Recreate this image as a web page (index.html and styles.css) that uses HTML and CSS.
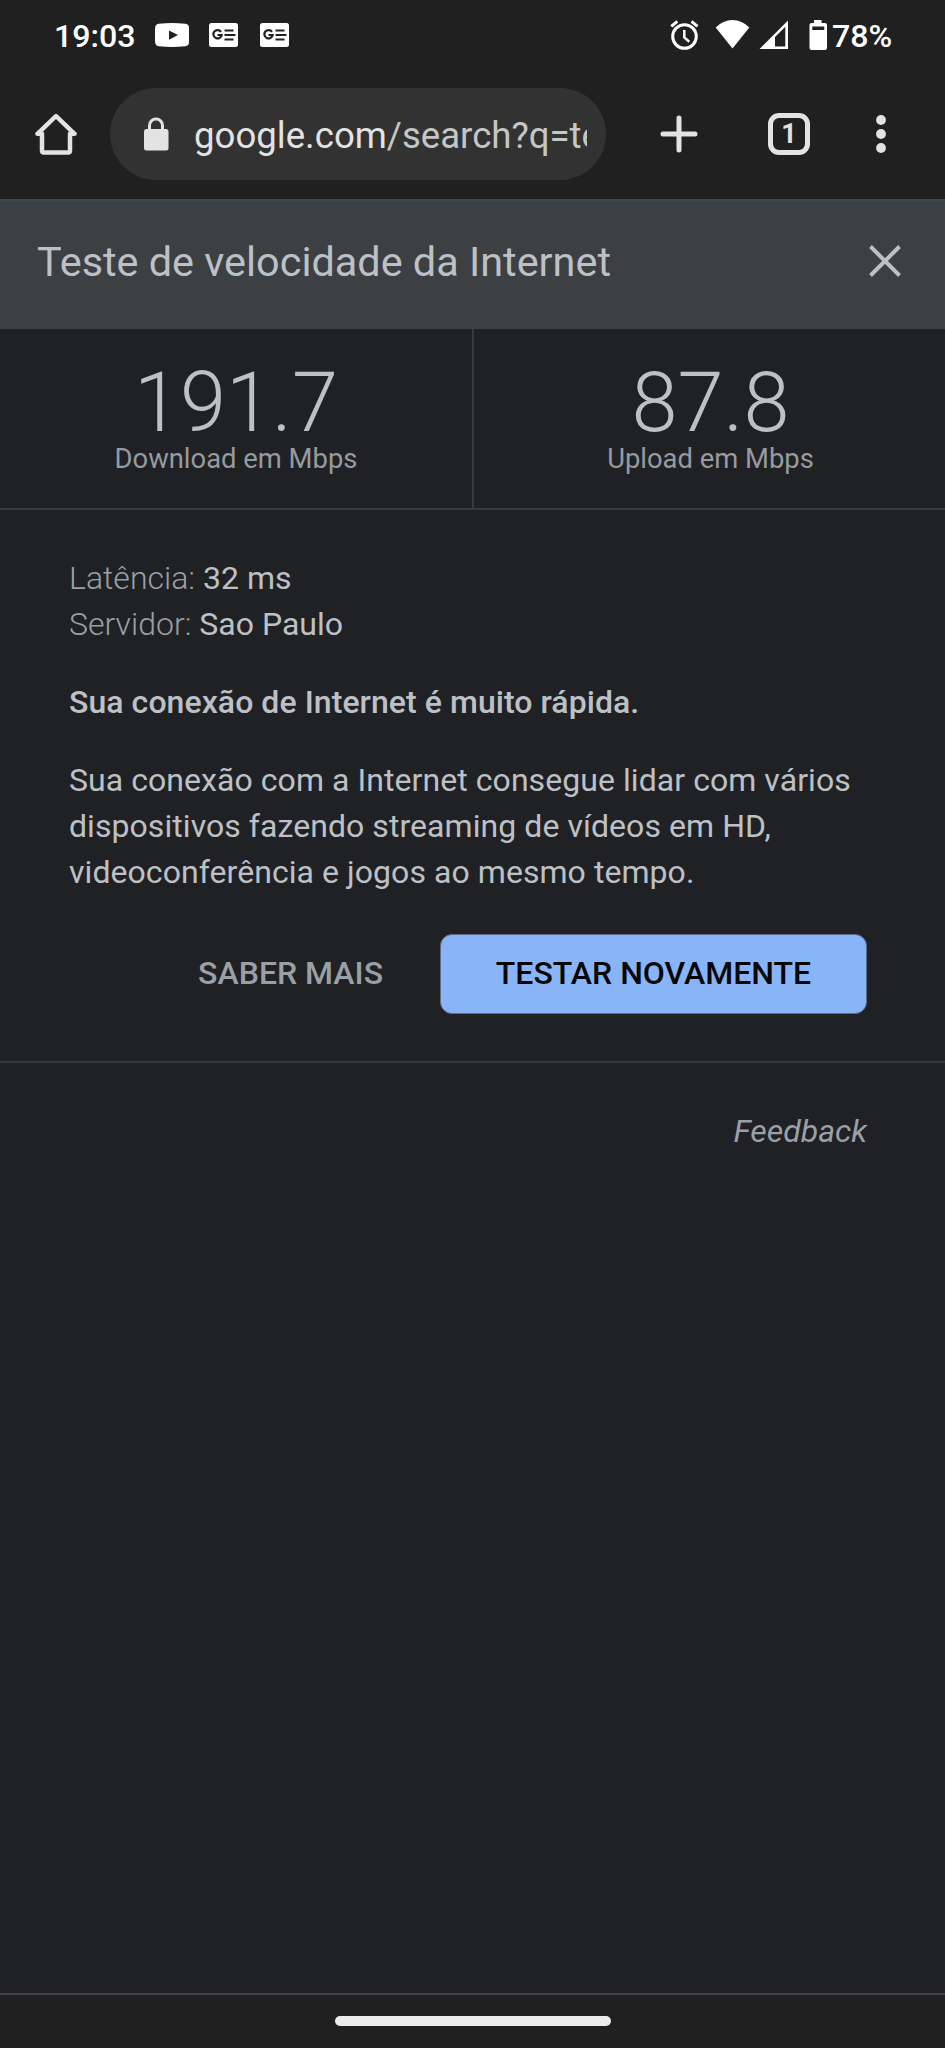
FILE: index.html
```html
<!DOCTYPE html>
<html lang="pt-BR">
<head>
<meta charset="utf-8">
<title>Teste de velocidade da Internet</title>
<link rel="stylesheet" href="styles.css">
</head>
<body>
<div class="screen">
  <div class="status">
    <span class="clock">19:03</span>
    <svg class="notif-video" width="34" height="24" viewBox="0 0 34 24"><path fill="#fff" fill-rule="evenodd" d="M4 .7Q17-.7 30 .7q4 .3 4 4Q34.500 12 34 19.300q0 3.700-4 4Q17 24.700 4 23.300q-3.600-.3-3.900-4Q-.4 12 .1 4.700.4 1 4 .7zM14 7.500v9.200l9-4.600z"/></svg>
    <svg class="notif-news" width="29" height="24" viewBox="0 0 29 24"><rect width="29" height="24" rx="2.500" fill="#fff"/><g fill="none" stroke="#202020" stroke-width="2.200"><path d="M12 8.800A4.200 4.200 0 1 0 12.700 12H8.500"/><path d="M15.500 7.500h9M15.500 12h11M15.500 16.500h9"/></g></svg>
    <svg class="notif-news second" width="29" height="24" viewBox="0 0 29 24"><rect width="29" height="24" rx="2.500" fill="#fff"/><g fill="none" stroke="#202020" stroke-width="2.200"><path d="M12 8.800A4.200 4.200 0 1 0 12.700 12H8.500"/><path d="M15.500 7.500h9M15.500 12h11M15.500 16.500h9"/></g></svg>
    <svg class="sys-icons" width="160" height="32" viewBox="0 0 160 32">
      <g fill="none" stroke="#fff"><circle cx="15.500" cy="17.500" r="11.800" stroke-width="3"/><path stroke-width="2.500" d="M15.300 11v7.500l5 4.300"/><path stroke-width="3" d="M2.300 7.300l6-5M28.500 7.300l-6-5"/></g>
      <path fill="#fff" d="M46.700 8.500Q54 1 63.500 1T80.300 8.500L63.500 29.500z"/>
      <path fill="#fff" fill-rule="evenodd" d="M90.500 30L119 1.500V30zM106 18v9.500h10.300V7.800z"/>
      <path fill="#fff" fill-rule="evenodd" d="M145 1h7.500v3h3.500q2 0 2 2v23q0 2-2 2h-13.500q-2 0-2-2V6q0-2 2-2h2.500zM143.300 7.500v3.500h12V7.500z"/>
    </svg>
    <span class="battery">78%</span>
  </div>
  <div class="toolbar">
    <svg class="home" width="42" height="42" viewBox="0 0 42 42"><path fill="none" stroke="#e3e3e3" stroke-width="4.500" stroke-linejoin="round" stroke-linecap="round" d="M2.500 20.800L21 3l18.500 17.800M2.500 20.800H7V37.500q0 2 2 2h24q2 0 2-2V20.800h4.500"/></svg>
    <div class="omnibox">
      <svg width="26" height="34" viewBox="0 0 26 34"><rect x="1" y="12" width="24.500" height="21.500" rx="2.500" fill="#e3e3e3"/><path fill="none" stroke="#e3e3e3" stroke-width="3" d="M6.500 13V8.500a6.500 6.500 0 0 1 13 0V13"/></svg>
      <div class="url">google.com<span class="path">/search?q=teste</span></div>
    </div>
    <svg class="plus" width="38" height="38" viewBox="0 0 38 38"><path stroke="#e3e3e3" stroke-width="5" stroke-linecap="round" d="M19 3v32M3 19h32"/></svg>
    <div class="tabs">1</div>
    <svg class="more" width="10" height="38" viewBox="0 0 10 38"><g fill="#e3e3e3"><circle cx="5" cy="5" r="4.900"/><circle cx="5" cy="19" r="4.900"/><circle cx="5" cy="33" r="4.900"/></g></svg>
  </div>
  <header class="title-bar">
    <h1>Teste de velocidade da Internet</h1>
    <svg class="close" width="32" height="32" viewBox="0 0 32 32"><path stroke="#bdc1c6" stroke-width="4" d="M1.500 1.500l29 29M30.500 1.500l-29 29"/></svg>
  </header>
  <section class="stats">
    <div class="stat down"><div class="value">191.7</div><div class="label">Download em Mbps</div></div>
    <div class="stat up"><div class="value">87.8</div><div class="label">Upload em Mbps</div></div>
  </section>
  <section class="details">
    <div><span class="key">Latência:</span> <span class="latency">32 ms</span></div>
    <div><span class="key">Servidor:</span> <span class="server">Sao Paulo</span></div>
    <p class="verdict">Sua conexão de Internet é muito rápida.</p>
    <p class="summary">Sua conexão com a Internet consegue lidar com vários<br>dispositivos fazendo streaming de vídeos em HD,<br>videoconferência e jogos ao mesmo tempo.</p>
    <div class="actions"><span class="learn">SABER MAIS</span><span class="retry">TESTAR NOVAMENTE</span></div>
  </section>
  <section class="feedback"><span>Feedback</span></section>
  <footer class="nav"><div class="handle"></div></footer>
</div>
</body>
</html>
```
FILE: styles.css
```css
* { box-sizing: border-box; }
body { margin: 0; background: #202124; font-family: Roboto, sans-serif; color: #bdc1c6; }
svg { display: block; flex: none; }
.screen { width: 945px; height: 2048px; display: flex; flex-direction: column; overflow: hidden; }
.status { height: 70px; flex: none; background: #202020; display: flex; align-items: center; padding-left: 54px; color: #fff; font-weight: 500; font-size: 32.2px; white-space: nowrap; }
.clock { width: 101px; line-height: 40px; padding-top: 2px; }
.notif-news { margin-left: 20px; }
.notif-news.second { margin-left: 22px; }
.sys-icons { margin-left: 380px; }
.battery { margin-left: 3px; line-height: 40px; padding-top: 2px; }
.toolbar { height: 129px; flex: none; background: #202020; display: flex; align-items: center; padding: 0 0 1px 35px; }
.omnibox { margin-left: 33px; width: 496px; height: 92px; border-radius: 46px; background: #323232; display: flex; align-items: center; padding: 0 19px 0 33px; }
.url { margin-left: 25px; padding-top: 4px; flex: 1; min-width: 0; overflow: hidden; white-space: nowrap; font-size: 36.6px; line-height: 46px; color: #e3e3e3; }
.path { color: #c4c7c5; }
.plus { margin-left: 54px; }
.tabs { margin-left: 70px; width: 42px; height: 42px; border: 5px solid #e3e3e3; border-radius: 11px; font-size: 27px; font-weight: 700; line-height: 32px; text-align: center; color: #e3e3e3; }
.more { margin-left: 66px; }
.title-bar { height: 130px; flex: none; border-top: 2px solid #434546; background: #3c4043; display: flex; align-items: center; justify-content: space-between; padding: 0 44px 6px 37px; }
h1 { margin: 0; font-size: 41.4px; line-height: 50px; font-weight: 400; white-space: nowrap; }
.close { margin-bottom: 3px; }
.stats { height: 181px; flex: none; display: flex; border-bottom: 2px solid #37393c; text-align: center; }
.stat { padding-top: 32px; }
.down { width: 474px; border-right: 2px solid #37393c; }
.up { flex: 1; padding-left: 2px; }
.value { font-size: 83px; font-weight: 300; line-height: 84px; }
.label { font-size: 27.4px; line-height: 29px; color: #969ba1; }
.details { height: 553px; flex: none; border-bottom: 2px solid #37393c; padding: 45px 78px 0 69px; font-size: 32px; line-height: 46px; white-space: nowrap; }
.key { font-weight: 300; color: #9aa0a6; }
p { margin: 32px 0 0; letter-spacing: 0.06px; }
.verdict { font-weight: 500; }
.actions { display: flex; justify-content: flex-end; align-items: center; margin-top: 39px; font-weight: 500; }
.learn { color: #9aa0a6; margin-right: 57px; padding-bottom: 2px; }
.retry { width: 427px; height: 80px; border: 1px solid #5a6c8b; border-radius: 12px; background: #8ab4f8; color: #050607; display: flex; align-items: center; justify-content: center; padding-bottom: 2px; }
.feedback { flex: 1; text-align: right; padding: 45px 78px 0 0; font-size: 32px; line-height: 46px; font-style: italic; color: #9aa0a6; }
.nav { height: 55px; flex: none; border-top: 2px solid #414344; background: #202020; display: flex; justify-content: center; padding-top: 21px; }
.handle { width: 276px; height: 10px; border-radius: 5px; background: #ececec; }
```
